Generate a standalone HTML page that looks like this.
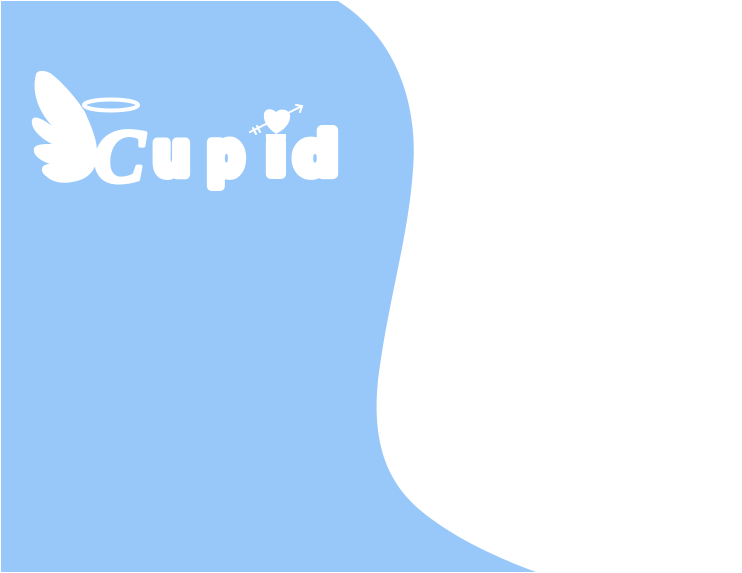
<!DOCTYPE html>
<html><head><style>
html,body{margin:0;padding:0;background:#fff;width:742px;height:573px;overflow:hidden}
svg{display:block}
</style></head><body>
<svg width="742" height="573" viewBox="0 0 742 573" xmlns="http://www.w3.org/2000/svg">
<path d="M1 1 L338 1 C400 40 418 110 413 170 C408 240 388 300 378 380 C372 440 385 480 420 510 C450 535 490 555 536 572 L1 572 Z" fill="#98c8f9"/>
<path d="M36 74 C32 90 36 108 52 126 C44 120 34 114 32 120 C30 130 44 140 52 144 C42 144 32 144 34 152 C36 158 44 162 50 164 C40 164 40 172 46 176 C52 182 62 184 72 182 C88 180 98 170 97 152 C97 140 92 128 85 112 C75 96 60 80 50 73 C44 70 38 70 36 74 Z" fill="#fff"/>
<ellipse cx="111" cy="105" rx="27" ry="5.5" fill="none" stroke="#fff" stroke-width="4"/>
<text x="94" y="182" font-family="Liberation Serif, serif" font-weight="bold" font-style="italic" font-size="76" fill="#fff" stroke="#fff" stroke-width="4" stroke-linejoin="round">C</text>
<g font-family="DejaVu Sans, sans-serif" font-weight="bold" font-size="58" fill="#fff" stroke="#fff" stroke-width="10" stroke-linejoin="round">
<text x="153" y="174" textLength="37" lengthAdjust="spacingAndGlyphs">u</text>
<text x="207" y="174" textLength="37" lengthAdjust="spacingAndGlyphs">p</text>
<text x="266" y="174">i</text>
<text x="294" y="174" textLength="44" lengthAdjust="spacingAndGlyphs">d</text>
</g>
<rect x="260" y="104" width="34" height="30" fill="#98c8f9"/>
<path d="M276 134 C268 128 263 122 264 114 C265 108 272 108 276 112 C280 108 289 109 290 115 C291 123 284 130 276 134 Z" fill="#fff"/>
<path d="M250 132 L302 106 M296 105 L302 106 L300 112 M253 128 L256 134 M257 126 L260 132" stroke="#fff" stroke-width="2" fill="none" stroke-linecap="round"/>
</svg>
</body></html>
